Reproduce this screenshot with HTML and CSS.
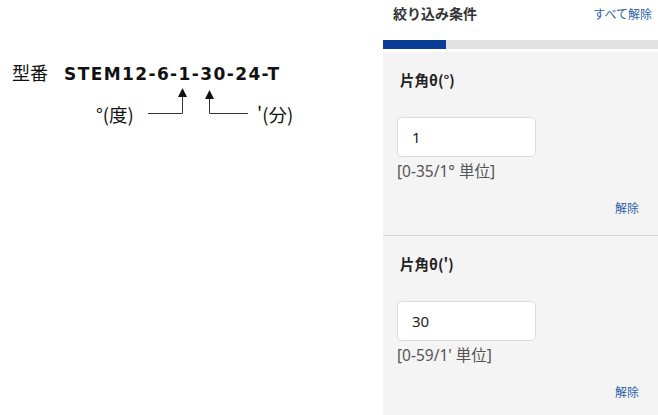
FILE: index.html
```html
<!doctype html>
<html lang="ja">
<head>
    <meta charset="UTF-8">
    <title>型番と絞り込み条件</title>
    <link rel="stylesheet" href="styles.css">
</head>
<body>
<div class="figure">
    <div class="model">
        <span class="model-label">型番</span>
        <span class="model-code">STEM12-6-1-30-24-T</span>
    </div>
    <svg class="arrows" width="383" height="140" viewBox="0 0 383 140">
        <polyline points="148,113.5 182.5,113.5 182.5,95" fill="none" stroke="#333" stroke-width="1"/>
        <polygon points="182.5,88 178,97 187,97" fill="#111"/>
        <polyline points="248,113.5 209.5,113.5 209.5,97" fill="none" stroke="#333" stroke-width="1"/>
        <polygon points="209.5,90 205,99 214,99" fill="#111"/>
    </svg>
    <span class="note note-deg">°(度)</span>
    <span class="note note-min">'(分)</span>
</div>

<div class="panel">
    <div class="panel-head">
        <span class="panel-title">絞り込み条件</span>
        <a href="#" class="link">すべて解除</a>
    </div>
    <div class="progress"><div class="progress-fill"></div></div>

    <div class="filter">
        <div class="filter-title">片角θ(°)</div>
        <input type="text" class="filter-input" value="1">
        <div class="filter-hint">[0-35/1° 単位]</div>
        <div class="filter-clear"><a href="#" class="link">解除</a></div>
    </div>

    <div class="filter">
        <div class="filter-title">片角θ(')</div>
        <input type="text" class="filter-input" value="30">
        <div class="filter-hint">[0-59/1' 単位]</div>
        <div class="filter-clear"><a href="#" class="link">解除</a></div>
    </div>
</div>
</body>
</html>
```

FILE: styles.css
```css
*
{
    box-sizing: border-box;
}

body
{
    margin: 0;
    display: flex;
    background-color: #fff;
    color: #111;
    font-family: "Noto Sans", "Noto Sans CJK JP", sans-serif;
    overflow: hidden;
}

.figure
{
    position: relative;
    width: 383px;
    flex-shrink: 0;
}

.model
{
    display: flex;
    align-items: baseline;
    gap: 16px;
    padding: 61px 0 0 12px;
    line-height: 22px;
}

.model-label
{
    font-family: "Noto Sans CJK JP", sans-serif;
    font-size: 18px;
}

.model-code
{
    font-family: "DejaVu Sans", sans-serif;
    font-weight: bold;
    font-size: 17px;
    letter-spacing: 1.4px;
}

.arrows
{
    position: absolute;
    left: 0;
    top: 0;
}

.note
{
    position: absolute;
    top: 103px;
    font-family: "Noto Sans CJK JP", sans-serif;
    font-size: 18.5px;
    line-height: 22px;
}

.note-deg
{
    left: 96px;
}

.note-min
{
    left: 257px;
}

.panel
{
    width: 275px;
    flex-shrink: 0;
}

.panel-head
{
    display: flex;
    justify-content: space-between;
    align-items: center;
    height: 26px;
    padding: 0 6px 0 10px;
}

.panel-title
{
    font-family: "Noto Sans CJK JP", sans-serif;
    font-weight: bold;
    font-size: 14px;
    color: #333;
}

.link
{
    font-family: "Noto Sans CJK JP", sans-serif;
    font-size: 12px;
    color: #2b5fad;
    text-decoration: none;
}

.progress
{
    height: 9px;
    margin: 14px 0 3px;
    background-color: #e2e2e2;
}

.progress-fill
{
    width: 63px;
    height: 100%;
    background-color: #093c96;
}

.filter
{
    padding: 20px 19px 19px 14px;
    background-color: #f4f4f4;
    border-bottom: 1px solid #dadada;
}

.filter-title
{
    padding-left: 3px;
    font-family: "Noto Sans CJK JP", sans-serif;
    font-weight: bold;
    font-size: 14.5px;
    line-height: 16px;
    color: #222;
}

.filter-input
{
    display: block;
    width: 139px;
    height: 40px;
    margin-top: 29px;
    padding: 0 14px;
    border: 1px solid #dcdcdc;
    border-radius: 5px;
    background-color: #fff;
    font-family: "Noto Sans", sans-serif;
    font-size: 15px;
    color: #222;
    outline: none;
}

.filter-hint
{
    margin-top: 4px;
    font-family: "Noto Sans", "Noto Sans CJK JP", sans-serif;
    font-size: 15.5px;
    line-height: 21px;
    color: #555;
}

.filter-clear
{
    margin-top: 17px;
    line-height: 16px;
    text-align: right;
}
```
